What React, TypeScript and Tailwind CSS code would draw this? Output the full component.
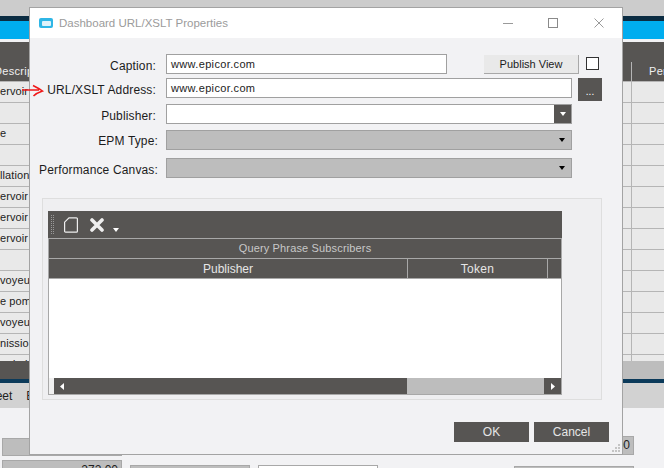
import React from 'react'

const font = "font-['Liberation_Sans',Arial,sans-serif]"

const leftRows = ['ervoir', '', 'e', '', 'llation', 'ervoir I', 'ervoir C', 'ervoir', '', 'voyeur', 'e pomp', 'voyeur', 'nissio', 'n de l']

function Background() {
  return (
    <div className="flex h-[468px] w-[664px] flex-col overflow-hidden bg-[#f2f2f4]">
      <div className="h-[16px] shrink-0 bg-[#cccccc]" />
      <div className="h-[5px] shrink-0 bg-[#0b2c42]" />
      <div className="h-[18px] shrink-0 bg-[#00adef]" />
      <div className="h-[3px] shrink-0 bg-[#f2f2f4]" />
      <div className="h-[20px] shrink-0 bg-[#575553]" />

      {/* grid header */}
      <div className="flex h-[20px] shrink-0 items-center justify-between border-b border-[#b5b5b5] bg-[#575553] text-[11px] tracking-[0.3px] text-[#f0f0f0]">
        <span className="ml-[-6px]">Descrip</span>
        <div className="flex h-full w-[33px] items-center border-l border-[#b5b5b5] pl-[17px]">
          <span>Per</span>
        </div>
      </div>

      {/* grid rows */}
      <div className="flex h-[279px] shrink-0 flex-col overflow-hidden bg-[#e9e9e9]">
        {leftRows.map((row, i) => (
          <div key={i} className="flex h-[21px] shrink-0 items-center justify-between border-b border-[#b5b5b5] pb-[2px] text-[11px] tracking-[0.1px] text-[#222222]">
            <span className="whitespace-pre">{row}</span>
            <div className="mb-[-2px] h-[21px] w-[33px] border-l border-[#b5b5b5]" />
          </div>
        ))}
      </div>

      <div className="flex h-[18px] shrink-0 bg-[#bdbdbd]">
        <div className="w-[30px] bg-[#575553]" />
      </div>
      <div className="h-[4px] shrink-0 bg-[#0b3a5a]" />
      <div className="flex h-[25px] shrink-0 items-center gap-[14px] bg-[#d2d2d2] text-[12px] text-[#222222]">
        <span className="ml-[-19px]">Sheet</span>
        <span>E</span>
      </div>

      {/* bottom summary fields */}
      <div className="flex flex-1 text-[12px] text-[#222222]">
        <div className="ml-[2px] w-[120px] pt-[30px]">
          <div className="h-[18px] border border-[#a8a8a8] bg-[#bdbdbd]" />
          <div className="mt-[4px] h-[18px] border border-[#a8a8a8] bg-[#bdbdbd] pr-[3px] text-right">272.00</div>
        </div>
        <div className="ml-[8px] w-[120px] pt-[57px]">
          <div className="h-[18px] border border-[#a8a8a8] bg-[#bdbdbd]" />
        </div>
        <div className="ml-[8px] w-[120px] pt-[57px]">
          <div className="h-[18px] border border-[#a8a8a8] bg-white" />
        </div>
        <div className="ml-[136px] w-[120px] pt-[28px]">
          <div className="h-[19px] border border-[#a8a8a8] bg-[#bdbdbd] pr-[3px] text-right leading-[17px]">0.00</div>
          <div className="mt-[11px] h-[18px] border border-[#a8a8a8] bg-[#bdbdbd]" />
        </div>
      </div>
    </div>
  )
}

function Caret({ className }: { className: string }) {
  return (
    <svg width="6" height="4" viewBox="0 0 6 4" className={className}>
      <path d="M0 0h6L3 4z" fill="currentColor" />
    </svg>
  )
}

function Label({ children, className }: { children: React.ReactNode; className: string }) {
  return (
    <div className={`shrink-0 whitespace-nowrap text-right text-[12px] leading-[16px] tracking-[0.15px] text-[#1c1c1c] ${className}`}>
      {children}
    </div>
  )
}

function GreySelect({ className }: { className: string }) {
  return (
    <div className={`flex h-[20px] w-[406px] items-center justify-end border border-[#a0a0a0] bg-[#bdbdbd] pr-[6px] ${className}`}>
      <Caret className="text-black" />
    </div>
  )
}

function SubscribersGrid() {
  return (
    <div className="flex h-[184px] w-[514px] flex-col bg-[#a8a8a8] text-[12px] text-[#e6e6e6]">
      {/* toolbar */}
      <div className="flex h-[27px] shrink-0 items-center bg-[#575553] text-[#eeeeee]">
        <div className="ml-[3px] h-[19px] w-[3px] border-x border-dotted border-[#9a9a9a]" />
        <svg width="14" height="16" viewBox="0 0 14 16" className="ml-[10px]" fill="none" stroke="currentColor" strokeWidth="1.2">
          <path d="M5 .8h7.4a1 1 0 0 1 1 1v12.4a1 1 0 0 1-1 1H1.6a1 1 0 0 1-1-1V5.2z" />
        </svg>
        <svg width="14" height="14" viewBox="0 0 14 14" className="ml-[12px]" stroke="currentColor" strokeWidth="3.6" strokeLinecap="round">
          <path d="M2 2l10 10M12 2L2 12" />
        </svg>
        <Caret className="ml-[9px] mt-[11px] text-white" />
      </div>

      <div className="mx-[1px] mt-[1px] flex h-[19px] shrink-0 items-center justify-center bg-[#575553] text-[11px] tracking-[0.15px] text-[#c8c8c8]">
        Query Phrase Subscribers
      </div>

      <div className="mx-[1px] mt-[1px] flex h-[19px] shrink-0 gap-[1px]">
        <div className="flex w-[358px] items-center justify-center bg-[#575553]">Publisher</div>
        <div className="flex w-[139px] items-center justify-center bg-[#575553] tracking-[0.3px]">Token</div>
        <div className="flex-1 bg-[#575553]" />
      </div>

      <div className="mx-[1px] mt-[1px] h-[99px] shrink-0 bg-white" />

      {/* horizontal scroll bar */}
      <div className="mx-[1px] mb-[1px] flex flex-1">
        <div className="w-[5px] bg-[#f0f0f0]" />
        <div className="flex w-[353px] items-center bg-[#575553] pl-[6px]">
          <svg width="4" height="7" viewBox="0 0 4 7"><path d="M4 0v7L0 3.5z" fill="#ffffff" /></svg>
        </div>
        <div className="flex-1 bg-[#bdbdbd]" />
        <div className="flex w-[17px] items-center justify-center bg-[#575553]">
          <svg width="4" height="7" viewBox="0 0 4 7"><path d="M0 0v7l4-3.5z" fill="#ffffff" /></svg>
        </div>
      </div>
    </div>
  )
}

function Dialog() {
  return (
    <div className="absolute left-[29px] top-[7px] flex h-[448px] w-[594px] flex-col border border-[#a3a3a3] bg-[#f2f2f4]">
      {/* title bar */}
      <div className="flex h-[30px] shrink-0 items-center bg-white">
        <div className="ml-[9px] flex h-[10px] w-[14px] items-center justify-center rounded-[2px] bg-[#2fb6e6]">
          <div className="h-[5px] w-[9px] rounded-[1px] bg-[#dff2fa]" />
        </div>
        <span className="ml-[6px] pt-[1px] text-[11.5px] text-[#9b9b9b]">Dashboard URL/XSLT Properties</span>
        <div className="ml-auto flex items-center">
          <div className="h-[1px] w-[10px] bg-[#9a9a9a]" />
          <div className="ml-[35px] h-[10px] w-[10px] border border-[#8a8a8a]" />
          <svg width="10" height="10" viewBox="0 0 10 10" className="ml-[36px] mr-[18px]" stroke="#9a9a9a" strokeWidth="1">
            <path d="M.5.5l9 9M9.5.5l-9 9" />
          </svg>
        </div>
      </div>

      {/* form */}
      <div className="pt-[16px]">
        <div className="flex items-center">
          <Label className="w-[126px] pt-[4px]">Caption:</Label>
          <div className="ml-[10px] flex h-[20px] w-[281px] items-center border border-[#a0a0a0] bg-white pl-[4px] pt-[1px] text-[11px] tracking-[0.35px] text-[#222222]">www.epicor.com</div>
          <div className="ml-[37px] flex h-[19px] w-[95px] items-center justify-center border-b border-r border-[#a8a8a8] bg-[#e9e9e9] pt-[1px] text-[11px] text-[#1c1c1c]">Publish View</div>
          <div className="mb-[2px] ml-[7px] h-[13px] w-[13px] border-[1.5px] border-[#333333] bg-white" />
        </div>

        <div className="mt-[4px] flex items-start">
          <Label className="h-[20px] w-[126px] pt-[4px]">URL/XSLT Address:</Label>
          <div className="ml-[10px] flex h-[20px] w-[406px] items-center border border-[#a0a0a0] bg-white pl-[4px] text-[11px] tracking-[0.35px] text-[#222222]">www.epicor.com</div>
          <div className="ml-[6px] flex h-[23px] w-[24px] items-center justify-center bg-[#575553] pt-[3px] text-[10px] text-white">...</div>
        </div>

        <div className="mt-[3px] flex items-center">
          <Label className="w-[126px] pt-[4px]">Publisher:</Label>
          <div className="ml-[10px] flex h-[20px] w-[406px] justify-end border border-[#a0a0a0] bg-white">
            <div className="flex w-[17px] items-center justify-center bg-[#575553]">
              <Caret className="text-white" />
            </div>
          </div>
        </div>

        <div className="mt-[6px] flex items-center">
          <Label className="w-[128px] pt-[2px]">EPM Type:</Label>
          <GreySelect className="ml-[8px]" />
        </div>

        <div className="mt-[8px] flex items-center">
          <Label className="w-[128px] pt-[4px]">Performance Canvas:</Label>
          <GreySelect className="ml-[8px]" />
        </div>
      </div>

      {/* group box */}
      <div className="ml-[12px] mt-[20px] h-[202px] w-[560px] border border-[#dedede] bg-[#efeff1] pl-[5px] pt-[12px]">
        <SubscribersGrid />
      </div>

      <div className="ml-[424px] mt-[22px] flex gap-[5px] text-[12px] text-[#e6e6e6]">
        <div className="flex h-[20px] w-[75px] items-center justify-center bg-[#575553]">OK</div>
        <div className="flex h-[20px] w-[75px] items-center justify-center bg-[#575553]">Cancel</div>
      </div>

      {/* resize grip */}
      <svg width="9" height="9" viewBox="0 0 9 9" className="absolute bottom-[1px] right-[1px]" fill="#c4c4c4">
        <path d="M6 0h2v2H6zM3 3h2v2H3zM6 3h2v2H6zM0 6h2v2H0zM3 6h2v2H3zM6 6h2v2H6z" />
      </svg>
    </div>
  )
}

export default function App() {
  return (
    <div className={`relative h-[468px] w-[664px] overflow-hidden ${font}`}>
      <Background />
      <Dialog />
      {/* hand drawn annotation */}
      <svg width="24" height="14" viewBox="0 0 24 14" className="absolute left-[21px] top-[84px]" fill="none" stroke="#f01818" strokeWidth="1.5">
        <path d="M1 6h17M12 1.5c3 1.5 6 3 9.5 5.5-3 1-6 2-9 5" />
      </svg>
    </div>
  )
}
